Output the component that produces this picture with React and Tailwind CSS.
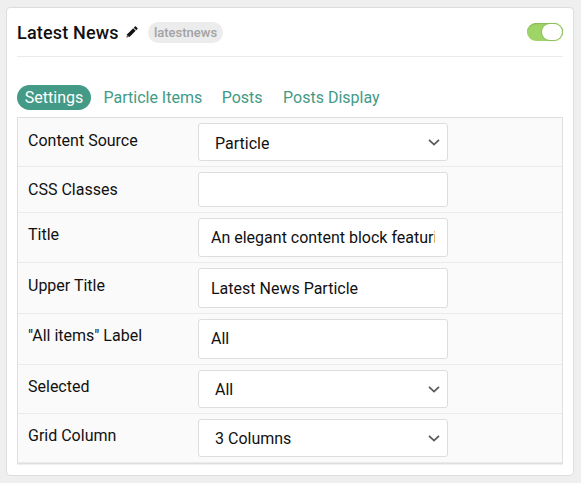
import React from 'react';

const rows = [
  { label: 'Content Source', value: 'Particle', select: true, row: 'h-[49px]', box: 'h-[38px] pt-[3px]', lab: 'pt-[10px]' },
  { label: 'CSS Classes', value: '', row: 'h-[46px]', box: 'h-[35px]', lab: 'pt-[10px]' },
  { label: 'Title', value: 'An elegant content block featuring latest news', row: 'h-[50px]', box: 'h-[39px]', lab: 'pt-[9px]' },
  { label: 'Upper Title', value: 'Latest News Particle', row: 'h-[51px]', box: 'h-[40px] pt-[1px]', lab: 'pt-[10px]' },
  { label: '"All items" Label', value: 'All', row: 'h-[51px]', box: 'h-[40px]', lab: 'pt-[9px]' },
  { label: 'Selected', value: 'All', select: true, row: 'h-[49px]', box: 'h-[38px] pt-[2px]', lab: 'pt-[9px]' },
  { label: 'Grid Column', value: '3 Columns', select: true, row: 'h-[49px]', box: 'h-[38px] pt-[2px]', lab: 'pt-[9px]' },
];

function Chevron() {
  return (
    <svg className="mt-[-2px] h-[7px] w-[12px] shrink-0" viewBox="0 0 12 7" fill="none" stroke="#5a5a5a" strokeWidth="1.8">
      <path d="M1 0.8 L6 5.6 L11 0.8" />
    </svg>
  );
}

function Pencil() {
  return (
    <svg className="ml-[7px] h-[12px] w-[12px]" viewBox="0 0 12 12" fill="#111">
      <path d="M8.9 0.6 Q9.4 0.1 9.9 0.6 L11.4 2.1 Q11.9 2.6 11.4 3.1 L10.3 4.2 L7.8 1.7Z" />
      <path d="M7.2 2.3 L9.7 4.8 L3.7 10.8 L0.5 11.6 L1.2 8.3Z" />
      <path d="M1.7 9.3 L2.9 10.4 L1.9 10.7 L1.4 10.2Z" fill="#fff" />
    </svg>
  );
}

function Field({ item }) {
  return (
    <div className={`${item.row} flex border-b border-[#ebebeb] pl-[10px]`}>
      <div className={`${item.lab} w-[170px] shrink-0 leading-[26px]`}>{item.label}</div>
      <div
        className={`${item.box} mt-[5px] flex w-[250px] items-center justify-between rounded-[3px] border border-[#dddddd] bg-white ${
          item.select ? 'pl-[16px] pr-[7px]' : 'px-[12px]'
        }`}
      >
        <span className="overflow-hidden whitespace-nowrap">{item.value}</span>
        {item.select && <Chevron />}
      </div>
    </div>
  );
}

export default function App() {
  return (
    <div className="h-[483px] w-[581px] overflow-hidden bg-[#efefef] pl-[6px] pt-[7px] font-['Roboto',sans-serif] text-[16px] text-[#111111]">
      <section className="h-[469px] w-[568px] rounded-[4px] border border-[#dddddd] bg-white px-[10px]">
        <header className="flex h-[49px] items-center border-b border-[#ebebeb]">
          <h1 className="w-[102px] whitespace-nowrap text-[18px] font-medium tracking-[0.18px]">Latest News</h1>
          <Pencil />
          <span className="ml-[10px] flex h-[21px] w-[75px] items-center justify-center rounded-full bg-[#ececec] pt-px text-[13px] font-medium text-[#a3a3a3]">
            latestnews
          </span>
          <span className="ml-auto flex h-[18px] w-[36px] items-center justify-end rounded-full bg-[#9fd468] p-px shadow-[inset_0_1px_1px_0_#86b85a]">
            <span className="h-[16px] w-[20px] rounded-full bg-white shadow-[0_0_1px_1px_#8fbf60]" />
          </span>
        </header>
        <nav className="mt-[28px] flex h-[25px] items-center text-[#439a86]">
          <span className="flex h-[25px] w-[74px] items-center justify-center rounded-full bg-[#439a86] pt-px text-white">Settings</span>
          <span className="ml-[12.5px] pt-px">Particle Items</span>
          <span className="ml-[19.5px] pt-px">Posts</span>
          <span className="ml-[20.5px] pt-px">Posts Display</span>
        </nav>
        <div className="mt-[7px] h-[347px] border border-[#dfdfdf] bg-[#fafafa] shadow-[0_1px_0_#efefef]">
          {rows.map((item) => (
            <Field key={item.label} item={item} />
          ))}
        </div>
      </section>
    </div>
  );
}
